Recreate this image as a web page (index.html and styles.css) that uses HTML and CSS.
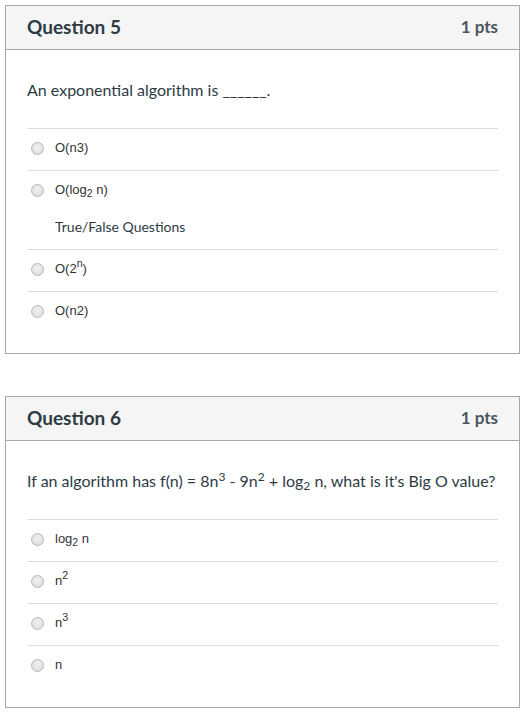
FILE: index.html
```html
<!DOCTYPE html>
<html>
<head>
<meta charset="utf-8">
<link rel="stylesheet" href="styles.css">
</head>
<body>
<div class="card">
  <div class="header">
    <span class="title">Question 5</span>
    <span class="pts">1 pts</span>
  </div>
  <div class="body">
    <div class="qtext">An exponential algorithm is ______.</div>
    <div class="answers">
      <div class="answer"><div class="row"><span class="radio"></span><span class="label">O(n3)</span></div></div>
      <div class="answer"><div class="row"><span class="radio"></span><span class="label">O(log<sub>2</sub> n)</span></div><div class="extra">True/False Questions</div></div>
      <div class="answer"><div class="row"><span class="radio"></span><span class="label">O(2<sup>n</sup>)</span></div></div>
      <div class="answer"><div class="row"><span class="radio"></span><span class="label">O(n2)</span></div></div>
    </div>
  </div>
</div>
<div class="card second">
  <div class="header">
    <span class="title">Question 6</span>
    <span class="pts">1 pts</span>
  </div>
  <div class="body">
    <div class="qtext">If an algorithm has f(n) = 8n<sup>3</sup> - 9n<sup>2</sup> + log<sub>2</sub> n, what is it's Big O value?</div>
    <div class="answers">
      <div class="answer"><div class="row"><span class="radio"></span><span class="label">log<sub>2</sub> n</span></div></div>
      <div class="answer"><div class="row"><span class="radio"></span><span class="label">n<sup>2</sup></span></div></div>
      <div class="answer"><div class="row"><span class="radio"></span><span class="label">n<sup>3</sup></span></div></div>
      <div class="answer"><div class="row"><span class="radio"></span><span class="label">n</span></div></div>
    </div>
  </div>
</div>
</body>
</html>
```
FILE: styles.css
```css
html, body {
  margin: 0;
  padding: 0;
  background: #ffffff;
}
body {
  padding: 5px 0 0 5px;
  font-family: Lato, "Open Sans", sans-serif;
  color: #2d3b45;
}
.card {
  width: 515px;
  box-sizing: border-box;
  border: 1px solid #a8a8a8;
  background: #fff;
}
.card.second {
  margin-top: 42px;
}
.header {
  height: 44px;
  box-sizing: border-box;
  background: #f5f5f5;
  border-bottom: 1px solid #a8a8a8;
  display: flex;
  justify-content: space-between;
  align-items: center;
  padding: 0 21px 2px 21px;
}
.title {
  font-size: 19px;
  font-weight: 700;
  color: #2d3b45;
}
.pts {
  font-size: 17px;
  font-weight: 700;
  color: #4a555e;
}
.body {
  padding: 30px 21px 20px 21px;
}
.qtext {
  font-size: 16px;
  line-height: 20px;
  height: 20px;
  color: #2d3b45;
  margin-bottom: 28px;
}
.qtext sup {
  font-size: 0.75em;
  line-height: 0;
  vertical-align: 0.5em;
}
.label sup {
  font-size: 0.82em;
  line-height: 0;
  vertical-align: 0.55em;
}
.qtext sub {
  font-size: 0.75em;
  line-height: 0;
  vertical-align: -0.25em;
}
.label sub {
  font-size: 0.8em;
  line-height: 0;
  vertical-align: -0.3em;
}
.answer {
  border-top: 1px solid #dcdcdc;
}
.row {
  height: 41px;
  box-sizing: border-box;
  padding: 0 0 3px 4px;
  display: flex;
  align-items: center;
}
.radio {
  width: 13px;
  height: 13px;
  box-sizing: border-box;
  border-radius: 50%;
  border: 1px solid #b9b9b9;
  background: radial-gradient(circle at 50% 40%, #f2f2f2 0%, #e2e2e2 60%, #d6d6d6 100%);
  margin-right: 11px;
  flex: none;
}
.label {
  font-family: "Liberation Sans", Arial, sans-serif;
  font-size: 13px;
  line-height: 16px;
  color: #333;
}
.extra {
  height: 37px;
  box-sizing: border-box;
  padding-left: 28px;
  padding-top: 7px;
  font-size: 14px;
  line-height: 16px;
  color: #2d3b45;
}
```
